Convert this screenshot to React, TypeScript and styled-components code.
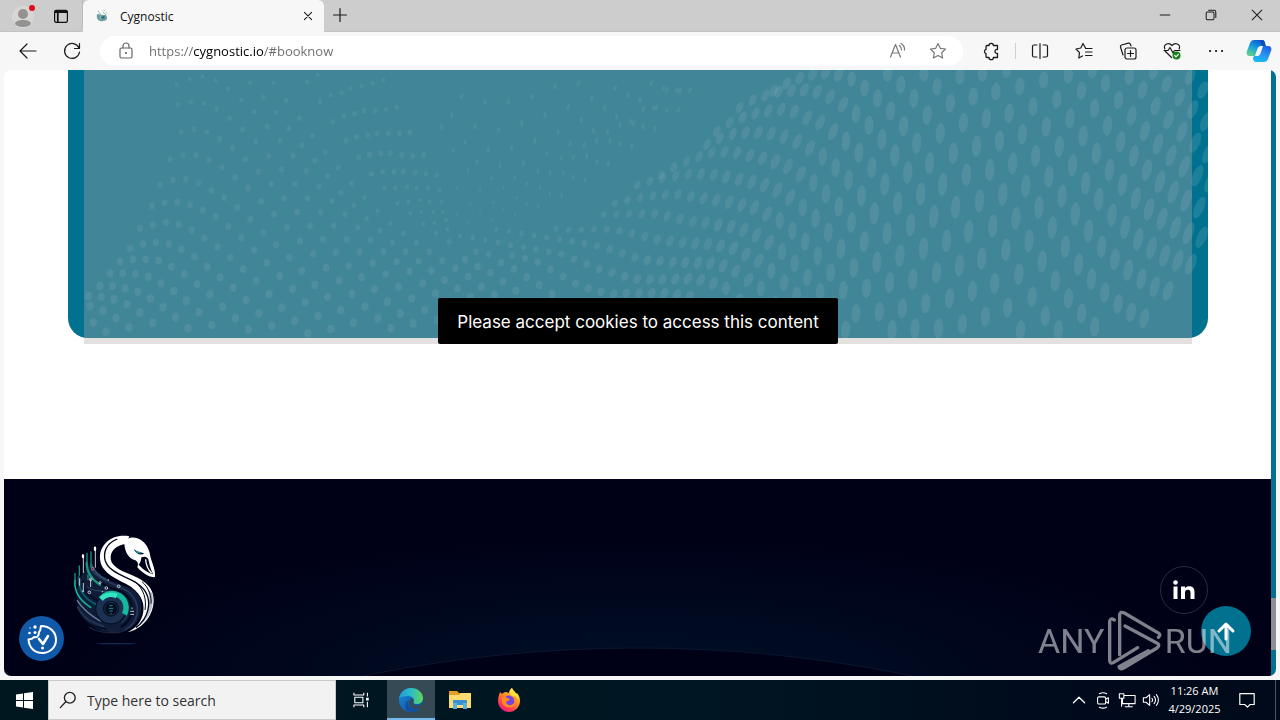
import React from 'react';
import styled, { createGlobalStyle } from 'styled-components';

const ui = `"Open Sans", "Noto Sans", sans-serif`;

const Global = createGlobalStyle`
  * { box-sizing: border-box; }
  body { margin: 0; font-family: ${ui}; background: #f7f7f7; }
  button { border: 0; padding: 0; margin: 0; background: none; color: inherit; font: inherit; cursor: pointer; }
  svg { display: block; }
`;

const Desktop = styled.div`
  display: flex;
  flex-direction: column;
  height: 100vh;
  overflow: hidden;
`;

/* ---------- browser chrome ---------- */

const TabBar = styled.header`
  display: flex;
  height: 32px;
  background: #cdcdcd;
  border-bottom: 1px solid #c2c2c2;
`;

const TabTools = styled.div`
  display: flex;
  align-items: center;
  justify-content: center;
  gap: 16px;
  width: 83px;
  border-right: 1px solid #bababa;
  border-bottom-right-radius: 6px;
`;

const Tab = styled.div`
  display: flex;
  align-items: center;
  width: 241px;
  height: 32px;
  padding: 0 8px 0 12px;
  background: #f7f7f7;
  border-radius: 6px 6px 0 0;
  font-size: 12px;
  color: #111;
`;

const TabTitle = styled.span`
  flex: 1;
  margin-left: 11px;
`;

const IconButton = styled.button<{ $w?: number }>`
  display: flex;
  align-items: center;
  justify-content: center;
  flex: none;
  width: ${(p) => p.$w ?? 44}px;
  height: 30px;
`;

const WindowControls = styled.div`
  display: flex;
  margin-left: auto;
`;

const Toolbar = styled.nav`
  display: flex;
  align-items: center;
  flex: none;
  height: 38px;
  padding-left: 6px;
  background: #f7f7f7;
`;

const AddressBar = styled.div`
  display: flex;
  align-items: center;
  flex: 1;
  height: 30px;
  margin: 0 6px;
  padding: 0 5px 0 16px;
  border-radius: 15px;
  background: #fff;
`;

const AddressInput = styled.input`
  flex: 1;
  min-width: 0;
  height: 24px;
  margin-left: 13px;
  padding: 0;
  border: 0;
  outline: 0;
  font: 13px ${ui};
  color: transparent;
  background: linear-gradient(90deg, #6b6b6b 45px, #000 45px, #000 115px, #6b6b6b 115px);
  background-clip: text;
  -webkit-background-clip: text;
`;

const Divider = styled.span`
  width: 1px;
  height: 16px;
  margin: 0 2px;
  background: #cfcfcf;
`;

/* ---------- web page ---------- */

const Frame = styled.div`
  flex: 1;
  min-height: 0;
  padding: 0 4px 4px;
`;

const Viewport = styled.div`
  position: relative;
  display: flex;
  height: 100%;
  border-radius: 7px;
  overflow: hidden;
  background: #fff;
`;

const Page = styled.main`
  display: flex;
  flex-direction: column;
  flex: 1;
  min-width: 0;
`;

const Scrollbar = styled.div`
  display: flex;
  flex-direction: column;
  justify-content: flex-end;
  width: 5px;
  padding-bottom: 26px;
  background: #00718f;
`;

const Thumb = styled.div`
  height: 52px;
  background: #8d8d92;
`;

const Booking = styled.section`
  padding: 0 63px 141px 64px;
`;

const Card = styled.div`
  position: relative;
  height: 268px;
  border-radius: 0 0 20px 20px;
  background: #00718f;
`;

const Dots = styled.svg`
  width: 100%;
  height: 268px;
  border-radius: 0 0 20px 20px;
`;

const Veil = styled.div`
  position: absolute;
  inset: 0 16px -6px;
  display: flex;
  align-items: flex-end;
  justify-content: center;
  background: rgba(178, 170, 168, 0.36);
`;

const ConsentButton = styled.button`
  height: 46px;
  padding: 1px 19px 0;
  border-radius: 2px;
  background: #000;
  color: #fff;
  font: 17px/46px Inter, sans-serif;
  white-space: nowrap;
`;

const Footer = styled.footer`
  position: relative;
  display: flex;
  justify-content: space-between;
  flex: 1;
  padding: 51px 63px 0 64px;
  background: radial-gradient(ellipse 620px 150px at 50% 100%, #001026, #000016);
  overflow: hidden;
`;

const Horizon = styled.svg`
  position: absolute;
  left: 0;
  bottom: 0;
  width: 100%;
  height: 30px;
`;

const SocialLink = styled.a`
  display: flex;
  align-items: center;
  justify-content: center;
  width: 48px;
  height: 48px;
  margin-top: 36px;
  border: 1px solid #2b2b42;
  border-radius: 50%;
  color: #fff;
`;

const RoundButton = styled.button<{ $size: number; $bg: string }>`
  position: absolute;
  display: flex;
  align-items: center;
  justify-content: center;
  width: ${(p) => p.$size}px;
  height: ${(p) => p.$size}px;
  border-radius: 50%;
  background: ${(p) => p.$bg};
`;

const CookieSettings = styled(RoundButton)`
  left: 15px;
  bottom: 15px;
`;

const BackToTop = styled(RoundButton)`
  right: 25px;
  bottom: 20px;
`;

const Watermark = styled.div`
  position: absolute;
  right: 44px;
  bottom: 4px;
  display: flex;
  align-items: center;
  justify-content: space-between;
  width: 194px;
  height: 62px;
  color: #fff;
  opacity: 0.5;
  font: 34px/62px Roboto, sans-serif;
  pointer-events: none;
`;

/* ---------- taskbar ---------- */

const Taskbar = styled.footer`
  display: flex;
  flex: none;
  height: 40px;
  background: linear-gradient(90deg, #001720, #001622 55%, #000a1c 85%, #000a1a);
  color: #fff;
`;

const TaskButton = styled.button<{ $active?: boolean }>`
  display: flex;
  align-items: center;
  justify-content: center;
  width: 48px;
  height: 40px;
  border-bottom: 2px solid ${(p) => (p.$active ? '#76b9ed' : 'transparent')};
  border-top: 2px solid transparent;
  background: ${(p) => (p.$active ? '#354a54' : 'transparent')};
  background-clip: border-box;
`;

const Search = styled.label`
  display: flex;
  align-items: center;
  gap: 10px;
  width: 288px;
  padding-left: 10px;
  border: 1px solid #c9c9c9;
  background: #f2f2f2;
`;

const SearchInput = styled.input`
  flex: 1;
  min-width: 0;
  padding: 0;
  border: 0;
  outline: 0;
  background: none;
  font: 14px ${ui};
  &::placeholder { color: #333; opacity: 1; }
`;

const Pinned = styled.div`
  display: flex;
  gap: 1px;
  padding-left: 2px;
`;

const Tray = styled.div`
  display: flex;
  align-items: center;
  margin-left: auto;
`;

const Clock = styled.button`
  width: 63px;
  font-size: 11px;
  line-height: 18px;
  text-align: center;
  white-space: nowrap;
`;

const ShowDesktop = styled.button`
  width: 5px;
  height: 40px;
  margin-left: 7px;
  border-left: 1px solid #4b5563;
`;

/* ---------- halftone wave ---------- */

/* Each strand starts at x, advances by a fixed step and lists its heights. */
type Strand = [x: number, step: number, ys: number[]];

const strands: Strand[] = [
  [1941, 38.6, [224, 205, 192, 188, 187, 190, 200, 215, 235, 260, 293, 330, 377, 430, 490, 557, 628, 700, 775]],
  [1970, 38.8, [184, 158, 142, 130, 122, 118, 125, 143, 158, 185, 213, 248, 293, 343, 400, 465, 535, 608, 685, 762]],
  [2039, 38.8, [112, 90, 76, 65, 62, 60, 65, 80, 103, 132, 166, 208, 256, 308, 372, 440, 513, 587, 663, 740]],
  [2141, 39, [62, 40, 24, 12, 8, 14, 27, 54, 85, 123, 168, 220, 280, 343, 412, 485, 565, 640, 713, 780]],
  [2483, 39.4, [10, 44, 85, 135, 190, 250, 315, 393, 468, 540, 612, 680, 738, 780]],
  [2592, 39.4, [10, 50, 100, 158, 228, 300, 373, 445, 513, 575, 633, 685, 730, 770]],
  [2700, 39.5, [18, 80, 145, 213, 280, 348, 412, 473, 530, 583, 628, 668, 702, 727, 745]],
  [2768, 39.7, [10, 65, 130, 193, 257, 320, 378, 432, 483, 530, 568, 600, 627, 650, 663]],
  [2840, 39.5, [0, 50, 110, 170, 230, 286, 340, 388, 435, 472, 508, 535, 557, 573, 582]],
  [2951, 39.5, [30, 87, 145, 198, 250, 300, 343, 385, 418, 447, 473, 490, 502]],
  [3025, 39.3, [15, 62, 115, 167, 215, 258, 300, 335, 367, 392, 413]],
  [3097, 39.4, [0, 40, 90, 137, 184, 222, 257, 290, 317, 335]],
  [3208, 39.5, [20, 60, 108, 148, 185, 218, 250]],
  [3281, 39, [5, 42, 82, 118, 155]],
  [3390, 39, [20, 60]],
  [1803, 38.1, [315, 292, 274, 260, 248, 245, 248, 257, 265, 275, 290, 312, 338, 372, 410, 458, 515, 577, 638, 715, 775]],
  [1732, 38.2, [346, 334, 325, 318, 313, 312, 315, 320, 328, 336, 345, 360, 383, 412, 445, 487, 537, 593, 655, 725, 780]],
  [1664, 38.1, [400, 390, 383, 378, 373, 372, 380, 385, 390, 397, 405, 413, 432, 452, 482, 515, 557, 608, 660, 730]],
  [1631, 38.2, [434, 432, 432, 432, 432, 438, 447, 455, 458, 465, 470, 480, 495, 517, 545, 580, 623, 665, 720, 780]],
  [1488, 38, [476, 480, 480, 478, 478, 482, 490, 500, 508, 513, 517, 520, 522, 528, 535, 553, 573, 602, 638, 675, 720]],
  [1309, 37.8, [478, 484, 490, 497, 503, 508, 513, 520, 528, 538, 550, 562, 570, 573, 577, 577, 578, 580, 588, 605, 630, 655, 700]],
  [1200, 38, [497, 503, 510, 517, 525, 532, 538, 545, 553, 567, 582, 598, 608, 620, 627, 628, 628, 627, 627, 630, 640, 655, 690]],
  [1357, 38, [556, 565, 577, 598, 620, 640, 655, 665, 672, 670, 670, 670, 670, 674, 680]],
  [1248, 38, [545, 553, 578, 597, 622, 645, 672]],
  [1215, 38, [568, 590, 608, 635, 662]],
  [330, 39, [268, 255, 255, 270, 292, 322, 355, 393, 432, 472, 513, 552, 593, 632, 672, 710, 745, 775]],
  [363, 38.7, [186, 178, 185, 207, 233, 268, 305, 343, 385, 427, 467, 508, 547, 588, 622, 657, 695, 730, 760]],
  [353, 39, [105, 97, 100, 117, 145, 178, 215, 258, 298, 342, 385, 427, 467, 508, 545, 580, 613, 650, 685, 720, 750]],
  [350, 38.8, [44, 27, 20, 32, 57, 90, 125, 170, 212, 257, 303, 350, 393, 433, 473, 510, 545, 575, 605, 640, 670, 698]],
  [570, 38.9, [38, 82, 127, 175, 225, 272, 318, 368, 405, 445, 482, 517, 545, 573, 602, 630, 655, 680]],
  [640, 39, [38, 92, 145, 197, 246, 293, 340, 383, 423, 460, 490, 518, 545, 572, 595, 620, 650, 674]],
  [741, 38.8, [35, 95, 155, 212, 263, 312, 355, 400, 430, 462, 490, 515]],
  [773, 38.9, [14, 75, 138, 200, 255, 305, 355, 395, 425, 458, 478]],
  [845, 39.2, [68, 130, 195, 250, 305, 350, 390, 425, 450]],
  [872, 39.5, [55, 122, 190, 250, 305, 355, 395, 425]],
  [905, 40, [48, 122, 190, 255, 308, 355, 395]],
  [938, 40, [40, 118, 190, 258, 312, 360]],
  [970, 40, [30, 112, 187, 255, 315]],
  [300, 38.7, [345, 330, 327, 340, 362, 383, 412, 447, 487, 525, 562, 602, 645, 680, 720, 757]],
  [275, 38.4, [408, 398, 396, 405, 420, 440, 470, 503, 540, 578, 618, 657, 697, 738, 777]],
  [240, 38.7, [475, 465, 458, 463, 480, 505, 532, 562, 597, 632, 672, 713, 752, 790]],
  [210, 38.7, [535, 522, 517, 522, 538, 560, 590, 622, 653, 690, 730, 767]],
  [180, 38.5, [575, 568, 568, 572, 590, 612, 643, 673, 710, 745, 778]],
  [150, 38.2, [610, 610, 612, 620, 640, 663, 692, 727, 765]],
  [120, 37.8, [648, 648, 655, 665, 685, 712, 742, 775]],
  [85, 38.6, [678, 680, 688, 703, 728, 758]],
  [90, 39, [708, 722, 745, 772]],
  [100, 38, [757, 785]],
  [1205, 70, [80, 95, 95, 80, 50, 40]],
  [1175, 70, [135, 170, 180, 160, 135, 110, 85, 55]],
  [1145, 69.8, [170, 215, 240, 235, 212, 185, 150, 115, 75, 40]],
  [1180, 70, [240, 275, 287, 280, 252, 220, 182, 140, 90, 55]],
  [1225, 69.5, [300, 325, 325, 302, 265, 225, 185, 155, 115, 60]],
  [1190, 70, [355, 358, 352, 340, 308, 262, 214, 165, 118, 60]],
  [1230, 70, [402, 398, 382, 352, 310, 258, 212, 160, 112, 62]],
  [1190, 70, [435, 432, 420, 402, 372, 322, 275, 222, 170, 120, 60]],
  [1225, 70, [455, 450, 436, 412, 376, 330, 280, 228, 176, 120]],
];

const clamp = (n: number) => Math.max(0, Math.min(1, n));

function Wave() {
  return (
    <Dots viewBox="24 0 3420 804" preserveAspectRatio="none" aria-hidden="true">
      {strands.flatMap(([x0, step, ys], s) =>
        ys.map((y, i) => {
          const x = x0 + step * i;
          const right = clamp((x - 1600) / 900);
          const low = clamp(y / 700);
          const small = step > 60;
          const pinch = 1 - 0.45 * Math.exp(-(((x - 1200) / 380) ** 2) - ((y - 430) / 120) ** 2);
          const rx = pinch * (small ? 5 : 6 + 5 * low * (1 - right) + 8 * right);
          const ry = pinch * (small ? 9 : 7 + 6 * low * (1 - right) + (18 + 10 * Math.sin(low * 2.6)) * right);
          const next = ys[i + 1] ?? y;
          const tilt = x > 1500 && x < 2350 && Math.abs(next - y) < 30 ? 24 : x > 3100 ? (x - 3050) / 16 : 4;
          const alpha = small ? 0.08 : 0.08 + 0.03 * Math.max(right, low - 0.4);
          return (
            <ellipse key={`${s}-${i}`} rx={rx} ry={ry} fill="#fff" fillOpacity={alpha}
              transform={`translate(${x} ${y}) rotate(${tilt})`} />
          );
        }),
      )}
    </Dots>
  );
}

/* ---------- drawings ---------- */

type LineProps = { size?: number; w?: number; color?: string; children: React.ReactNode };
const Line = ({ size = 20, w = 1.2, color = '#1b1b1b', children }: LineProps) => (
  <svg width={size} height={size} viewBox="0 0 20 20" fill="none" stroke={color} strokeWidth={w}
    strokeLinecap="round" strokeLinejoin="round" aria-hidden="true">{children}</svg>
);

const Swan = () => (
  <svg width="92" height="120" viewBox="204 30 276 360" role="img" aria-label="Cygnostic">
    <path d="M270 135C225 175 215 250 255 300C285 335 340 350 390 325C430 300 435 240 405 212C375 190 310 190 270 135Z" fill="#101d38" />
    <g fill="none" strokeLinecap="round">
      <path d="M275 150C300 185 350 190 385 215C425 250 420 305 375 330" stroke="#27395a" strokeWidth="5" />
      <path d="M285 178C315 205 350 205 375 222C408 255 402 295 365 320" stroke="#01081d" strokeWidth="6" />
      <path d="M262 200C285 222 325 205 362 226C390 248 393 285 365 308" stroke="#314664" strokeWidth="3" />
      <path d="M225 182C222 218 240 242 272 262" stroke="#16b69b" strokeWidth="5" />
      <path d="M236 170C234 210 252 236 286 252" stroke="#07586a" strokeWidth="6" />
      <path d="M248 185C248 210 262 226 290 240" stroke="#061023" strokeWidth="6" />
      <path d="M260 128C260 156 275 178 300 194" stroke="#16947f" strokeWidth="7" />
      <path d="M274 132C280 152 300 170 322 180" stroke="#31506b" strokeWidth="5" />
      <path d="M232 242C248 268 270 285 300 303" stroke="#6f8199" strokeWidth="4" />
      <path d="M234 262C246 290 272 308 310 318" stroke="#243450" strokeWidth="6" />
      <path d="M240 285C258 312 290 325 325 327" stroke="#01081d" strokeWidth="4" />
      <path d="M250 112V158M286 88V142M272 178V200M239 176V196M250 190V212" stroke="#c8ced8" strokeWidth="3" />
      <path d="M273 96V142M238 138V166M261 100V125M225 160V180M264 165V178" stroke="#159482" strokeWidth="4" />
      <path d="M285 83V89M249 106V111" stroke="#fff" strokeWidth="7" />
    </g>
    <g fill="none" stroke="#c8ccda" strokeWidth="3">
      <circle cx="278" cy="146" r="4" stroke="#c16f91" /><circle cx="272" cy="178" r="4" />
      <circle cx="300" cy="188" r="3" /><circle cx="319" cy="204" r="4" /><circle cx="356" cy="199" r="4" />
      <circle cx="337" cy="222" r="2" /><circle cx="268" cy="217" r="4" /><circle cx="249" cy="214" r="2" />
      <circle cx="307" cy="215" r="1" /><circle cx="325" cy="180" r="1" />
      <path d="M391 274H402M391 283H402M396 262V268" />
    </g>
    <circle cx="333" cy="266" r="47" fill="#061024" />
    <circle cx="333" cy="266" r="34" fill="none" stroke="#1c3151" strokeWidth="20" />
    <path d="M303 237A42 42 0 0 1 373 283" fill="none" stroke="#14b89c" strokeWidth="16" />
    <path d="M303 237A42 42 0 0 1 350 228" fill="none" stroke="#35e4c0" strokeWidth="14" />
    <circle cx="333" cy="266" r="19" fill="#030b1f" stroke="#29425c" strokeWidth="2" />
    <path d="M328 257H338M326 265H340M328 273H338M331 280H335" stroke="#218791" strokeWidth="3" />
    <path d="M388 49C335 40 298 75 300 115C302 158 345 174 380 193C420 215 434 245 430 275C425 308 405 325 383 337C430 326 462 285 461 238C460 199 430 180 395 165C355 149 330 135 332 110C334 90 350 75 378 72Z" fill="#fff" />
    <path d="M440 205C456 235 448 290 405 325C448 302 464 262 457 220Z" fill="#b6bdcc" />
    <g fill="none" stroke="#02051a">
      <path d="M352 57C320 70 308 95 316 123C326 153 365 165 396 181C434 200 452 231 444 269C438 296 422 313 408 323" strokeWidth="4" />
      <path d="M404 184C432 207 440 238 435 270" strokeWidth="3" />
      <path d="M426 185C448 204 455 231 453 251" strokeWidth="3" />
    </g>
    <path d="M373 70C380 49 405 47 426 62C444 76 449 94 452 113C458 133 467 150 465 171C448 174 427 159 412 142C416 132 414 124 404 120C386 116 374 96 373 70Z" fill="#fff" />
    <path d="M424 112C434 108 442 110 445 118C448 134 453 150 459 163C440 156 424 144 416 134C421 128 424 120 424 112Z" fill="#02051a" />
    <path d="M437 118C438 138 445 150 455 160" fill="none" stroke="#fff" strokeWidth="4" />
    <path d="M401 86C410 96 421 94 433 101C421 107 407 101 401 86Z" fill="#06172b" />
    <path d="M406 93C412 99 418 97 423 99" fill="none" stroke="#1596a0" strokeWidth="4" />
    <path d="M268 321C300 344 360 340 373 331M315 321L335 334L350 327" fill="none" stroke="#19243e" strokeWidth="4" />
    <ellipse cx="348" cy="371" rx="60" ry="2" fill="#16305c" />
  </svg>
);

const Copilot = () => (
  <svg width="26" height="26" viewBox="0 0 26 26" aria-hidden="true">
    <defs>
      <linearGradient id="cpA" x1="0.7" y1="0" x2="0.2" y2="1"><stop stopColor="#0a58cf" /><stop offset=".5" stopColor="#18a2dc" /><stop offset="1" stopColor="#62d487" /></linearGradient>
      <linearGradient id="cpB" x1="0.7" y1="0" x2="0.3" y2="1"><stop stopColor="#1f63df" /><stop offset=".6" stopColor="#299cf3" /><stop offset="1" stopColor="#14bdf0" /></linearGradient>
    </defs>
    <path d="M8 2H16C18 2 19 4 19 6L18 8H15C13 8 12 9 11 12L9 18H4C1 18 0 16 1 13L4 5C5 3 6 2 8 2Z" fill="url(#cpA)" />
    <path d="M18 24H10C8 24 7 22 7 20L8 18H11C13 18 14 17 15 14L17 8H22C25 8 26 10 25 13L22 21C21 23 20 24 18 24Z" fill="url(#cpB)" />
    <path d="M14 2H16C18 2 18.500 3 19 5L20 8H16Z" fill="#0c4cc0" />
  </svg>
);

const Edge = () => (
  <svg width="26" height="26" viewBox="0 0 26 26" aria-hidden="true">
    <defs>
      <linearGradient id="edA" x1="0" x2="1"><stop stopColor="#229bdc" /><stop offset=".5" stopColor="#2bbbc7" /><stop offset="1" stopColor="#61d85a" /></linearGradient>
      <linearGradient id="edB" x1="0" y1="0" x2="1" y2="1"><stop stopColor="#1b8ad8" /><stop offset="1" stopColor="#0b4c9d" /></linearGradient>
    </defs>
    <circle cx="13" cy="13" r="12" fill="url(#edB)" />
    <path d="M1 12C2 5 7 1 13 1C20 1 25 6 25 11C25 15 22 17 19 17C16 17 15 16 15.500 15C17 12 14 9 10 9C6 9 2 10 1 12Z" fill="url(#edA)" />
    <path d="M15.500 15C14.500 17 17 19 20 18.500C22 18.500 23.500 17 24.500 16C24 19 23 20 22 21C17 23 11 21 11 16C11 13 13 12 14 11C16 12 16 14 15.500 15Z" fill="#354a54" />
    <path d="M11 13C8 18 13 24 22 21C18 25 14 25.500 11 25C6 22 6 15 11 13Z" fill="#114f9f" />
  </svg>
);

const Folder = () => (
  <svg width="24" height="22" viewBox="0 0 24 22" aria-hidden="true">
    <path d="M1 2H9L11 4H23V19H1Z" fill="#e59f22" />
    <path d="M1 6H11L13 4H23V19H1Z" fill="#ffda70" />
    <path d="M6 11H18Q19 11 19 12V20H15V16H9V20H5V12Q5 11 6 11Z" fill="#3b91cf" />
    <path d="M5 14H9V20H5ZM15 14H19V20H15Z" fill="#55b1e6" />
  </svg>
);

const Firefox = () => (
  <svg width="24" height="24" viewBox="0 0 24 24" aria-hidden="true">
    <defs>
      <linearGradient id="ffA" x1=".8" y1="0" x2=".2" y2="1"><stop stopColor="#fff14c" /><stop offset=".4" stopColor="#ff9422" /><stop offset=".75" stopColor="#ff3a54" /><stop offset="1" stopColor="#e31587" /></linearGradient>
    </defs>
    <path d="M3 4L5 6C6 5 7 4 9 4L12 5C12 3 13 1 15 0C16 3 18 4 19 6L20 5C22 7 23 10 23 13C23 19 18 24 12 24S1 19 1 13C1 9 2 7 3 4Z" fill="url(#ffA)" />
    <circle cx="12" cy="13" r="5.500" fill="#7542e5" />
    <path d="M5 10C7 8 9 9 10 10L13 11C12 13 10 13 9 14C10 18 15 18 17 15C18 12 16 9 14 8C19 8 21 13 18 17C15 21 7 20 5 15Z" fill="#ff8a20" />
    <path d="M15 0C16 3 21 5 22 12C20 9 18 8 16 8C12 6 12 3 15 0Z" fill="#ffde3d" />
  </svg>
);

const RunMark = () => (
  <svg width="56" height="62" viewBox="0 0 168 186" fill="none" stroke="#fff" strokeLinecap="round" strokeLinejoin="round" aria-hidden="true">
    <path d="M22 30V30Q10 22 8 34V152Q9 164 20 157L92 113" strokeWidth="10" />
    <path d="M38 134V14Q40 3 52 9L156 70Q162 76 154 82" strokeWidth="10" />
    <path d="M54 48L148 98Q162 104 150 114L50 174Q38 180 36 170L124 122" strokeWidth="10" />
  </svg>
);

const star = 'M10 2.500L12.300 7.300L17.500 8L13.700 11.700L14.600 17L10 14.500L5.400 17L6.300 11.700L2.500 8L7.700 7.300Z';

export default function App() {
  return (
    <Desktop>
      <Global />
      <TabBar>
        <TabTools>
          <IconButton $w={24} aria-label="Profile">
            <svg width="24" height="26" viewBox="0 0 24 26">
              <circle cx="12" cy="14" r="11" fill="#d8d5d3" />
              <circle cx="12" cy="11" r="5" fill="#949291" />
              <path d="M4 21C4 18 8 17 12 17S20 18 20 21C17 25 7 25 4 21Z" fill="#949291" />
              <circle cx="21" cy="5" r="3" fill="#e00b1c" />
            </svg>
          </IconButton>
          <IconButton $w={20} aria-label="Tab actions">
            <Line size={16} w={1.5} color="#111"><rect x="2" y="3" width="16" height="15" rx="2" /><path d="M3 5H17M6 6V17" strokeWidth="2.200" /></Line>
          </IconButton>
        </TabTools>
        <Tab>
          <svg width="14" height="16" viewBox="0 0 14 16" aria-hidden="true">
            <path d="M2 6C1 11 4 14 8 13C12 13 13 10 11 7L8 7Z" fill="#6d9fa2" />
            <path d="M3 3L6 7L5 11M8 4L11 7" stroke="#8fb6ba" fill="none" />
            <path d="M6 9C8 12 11 10 9 8Z" fill="#2c5f72" /><path d="M7 3C9 1 11 3 12 6" stroke="#d0d6d8" fill="none" />
          </svg>
          <TabTitle>Cygnostic</TabTitle>
          <IconButton $w={16} aria-label="Close tab"><Line size={12} w={1.800}><path d="M4 4L16 16M16 4L4 16" /></Line></IconButton>
        </Tab>
        <IconButton $w={32} aria-label="New tab"><Line size={16} w={1.500}><path d="M10 2V18M2 10H18" /></Line></IconButton>
        <WindowControls>
          <IconButton $w={46} aria-label="Minimize"><Line size={12} w={1.700}><path d="M2 10H18" /></Line></IconButton>
          <IconButton $w={46} aria-label="Restore"><Line size={12} w={1.700}><rect x="2" y="5" width="13" height="13" rx="2" /><path d="M6 2H15Q18 2 18 5V14" /></Line></IconButton>
          <IconButton $w={46} aria-label="Close"><Line size={12} w={1.700}><path d="M2 2L18 18M18 2L2 18" /></Line></IconButton>
        </WindowControls>
      </TabBar>

      <Toolbar>
        <IconButton aria-label="Back"><Line><path d="M18 10H2M9 3L2 10L9 17" /></Line></IconButton>
        <IconButton aria-label="Refresh"><Line><path d="M17 7A7.500 7.500 0 1 0 17.500 11M17.500 2.500V7.500H12.500" /></Line></IconButton>
        <AddressBar>
          <Line color="#666"><rect x="4" y="7" width="12" height="10" rx="1.500" /><path d="M7 7V5A3 3 0 0 1 13 5V7" /><circle cx="10" cy="12" r=".5" fill="#666" /></Line>
          <AddressInput aria-label="Address" defaultValue="https://cygnostic.io/#booknow" />
          <IconButton $w={40} aria-label="Read aloud"><Line color="#777"><path d="M2.500 16L7.500 3.500L12.500 16M4.200 12H10.800M11.500 4.500Q13.500 6 13.500 9M13 2.500Q17 5 16.500 9" /></Line></IconButton>
          <IconButton $w={40} aria-label="Add to favorites"><Line color="#777"><path d={star} /></Line></IconButton>
        </AddressBar>
        <IconButton aria-label="Extensions"><Line w={1.300}><path d="M6 4.500H8A2.200 2.200 0 0 1 12.400 4.500H16.500V8.500Q14 8 14 10.400T16.500 12.300V16.500H12.400A2.200 2.200 0 0 1 8 16.500H6Q5 16.500 5 15.500V12.600A2.200 2.200 0 0 1 5 8.400V5.500Q5 4.500 6 4.500Z" /></Line></IconButton>
        <Divider />
        <IconButton aria-label="Split screen"><Line w={1.200}><path d="M7 4H4Q2.500 4 2.500 5.500V14.500Q2.500 16 4 16H7M13 4H16Q17.500 4 17.500 5.500V14.500Q17.500 16 16 16H13M10 2.500V17.500" /></Line></IconButton>
        <IconButton aria-label="Favorites"><Line w={1.200}><path d="M11.500 7L9 2.500L6.800 7L2 8L5.500 11.700L4.800 17L8.500 15M11.500 7.500H18M11.500 11H18M11.500 14.500H18" /></Line></IconButton>
        <IconButton aria-label="Collections"><Line w={1.200}><rect x="7" y="7" width="11" height="11" rx="2" /><path d="M12.500 9.500V15.500M9.500 12.500H15.500M5 14L2.500 6Q2 4.500 3.500 4L10.500 2.200Q12 2 12.500 3.500L13 5" /></Line></IconButton>
        <IconButton aria-label="Browser essentials"><Line w={1.200}><path d="M9.500 16.500L3 10M2.800 8C1 3 7 1 10 4.500C13 1 19 3 17.200 8M2 9.500H6L8 6.500L11 12L12.500 9.500H18" /><circle cx="14.500" cy="14.500" r="4" fill="#16821e" stroke="none" /><path d="M12.700 14.500L14 15.800L16.300 13.300" stroke="#fff" /></Line></IconButton>
        <IconButton aria-label="Settings and more"><Line><path d="M4 10H4.100M10 10H10.100M16 10H16.100" strokeWidth="2.200" /></Line></IconButton>
        <IconButton $w={42} aria-label="Copilot"><Copilot /></IconButton>
      </Toolbar>

      <Frame>
        <Viewport>
          <Page>
            <Booking id="booknow">
              <Card>
                <Wave />
                <Veil>
                  <ConsentButton>Please accept cookies to access this content</ConsentButton>
                </Veil>
              </Card>
            </Booking>
            <Footer>
              <Horizon viewBox="0 0 1267 30" preserveAspectRatio="none" aria-hidden="true">
                <circle cx="634" cy="1367" r="1365" fill="#000116" stroke="#0b1730" />
              </Horizon>
              <Swan />
              <SocialLink href="#linkedin" aria-label="LinkedIn">
                <svg width="22" height="20" viewBox="0 0 22 20" fill="#fff" aria-hidden="true">
                  <circle cx="2.500" cy="2.500" r="2.300" />
                  <path d="M.500 6.500H4.500V19H.500ZM8 6.500H12V8.200C13 6.800 14.500 6.200 16.300 6.200C20 6.200 21.500 8.500 21.500 12V19H17.500V12.800C17.500 10.800 16.800 9.800 15 9.800C13 9.800 12 11 12 13V19H8Z" />
                </svg>
              </SocialLink>
            </Footer>
          </Page>
          <Scrollbar><Thumb /></Scrollbar>
          <CookieSettings $size={45} $bg="#0f59a8" aria-label="Cookie settings">
            <svg width="32" height="32" viewBox="0 0 32 32" fill="none" stroke="#fff" strokeWidth="2" strokeLinecap="round" strokeLinejoin="round">
              <path d="M15 3C14 6 15 8 13 9C13 13 11 15 8 14C6 17 4 16 2.500 16.500C3 25 9 30 16.500 30C24 30 30 24 30 17C30 9 24 3 15 3Z" />
              <path d="M13 16L17 21L22 13" strokeWidth="2.600" />
              <g fill="#fff" stroke="none"><circle cx="9" cy="4" r="1.700" /><circle cx="3.500" cy="10" r="1.300" /><circle cx="9" cy="9.500" r="1.500" /><circle cx="4" cy="5" r=".7" /><circle cx="16.500" cy="25" r="1.500" /></g>
            </svg>
          </CookieSettings>
          <BackToTop $size={50} $bg="#00718f" aria-label="Back to top">
            <Line color="#fff" w={3} size={20}><path d="M10 18V3M3 10L10 3L17 10" /></Line>
          </BackToTop>
          <Watermark><span>ANY</span><RunMark /><span>RUN</span></Watermark>
        </Viewport>
      </Frame>

      <Taskbar>
        <TaskButton aria-label="Start">
          <svg width="17" height="17" viewBox="0 0 17 17" fill="#fff"><path d="M0 2.500L7 1.500V8H0ZM8 1.300L17 0V8H8ZM0 9H7V15.500L0 14.500ZM8 9H17V17L8 15.700Z" /></svg>
        </TaskButton>
        <Search>
          <Line size={18} w={1.500} color="#222"><circle cx="12" cy="7.500" r="6" /><path d="M7.500 12L1.500 18.500" /></Line>
          <SearchInput aria-label="Search" placeholder="Type here to search" />
        </Search>
        <Pinned>
          <TaskButton aria-label="Task view">
            <Line size={18} w={1.200} color="#fff"><path d="M1 2V4.500H12V2M1 18V15.500H12V18M2 7H11V13H2ZM16 2V6M16 12V18" strokeLinecap="butt" /><path d="M14.500 9H17.500" strokeWidth="3" strokeLinecap="butt" /></Line>
          </TaskButton>
          <TaskButton $active aria-label="Microsoft Edge"><Edge /></TaskButton>
          <TaskButton aria-label="File Explorer"><Folder /></TaskButton>
          <TaskButton aria-label="Firefox"><Firefox /></TaskButton>
        </Pinned>
        <Tray>
          <IconButton $w={24} aria-label="Show hidden icons"><Line size={14} w={1.800} color="#fff"><path d="M2 14L10 6L18 14" /></Line></IconButton>
          <IconButton $w={24} aria-label="Meet now"><Line size={18} color="#fff"><rect x="4" y="6.500" width="9" height="8" rx="1.500" /><path d="M13 9L16 7.500V13.500L13 12M6 3Q10 1 14 3M6 18Q10 20 14 18" /></Line></IconButton>
          <IconButton $w={24} aria-label="Network"><Line size={18} color="#fff"><path d="M7 5H19V14H5V9M12 14V17M8 17.500H16M1.500 3H6.500V8H1.500ZM4 8V17" /></Line></IconButton>
          <IconButton $w={24} aria-label="Volume"><Line size={18} color="#fff"><path d="M1.500 7.500H4.500L8.500 4V16L4.500 12.500H1.500ZM11 8Q12.500 10 11 12M13.500 6Q16.500 10 13.500 14M16 4Q20.500 10 16 16" /></Line></IconButton>
          <Clock><time dateTime="2025-04-29T11:26">11:26 AM<br />4/29/2025</time></Clock>
          <IconButton $w={42} aria-label="Notifications"><Line size={18} w={1.300} color="#fff"><path d="M2 3H18V15H13.500L10.500 18L7.500 15H2Z" /></Line></IconButton>
          <ShowDesktop aria-label="Show desktop" />
        </Tray>
      </Taskbar>
    </Desktop>
  );
}
